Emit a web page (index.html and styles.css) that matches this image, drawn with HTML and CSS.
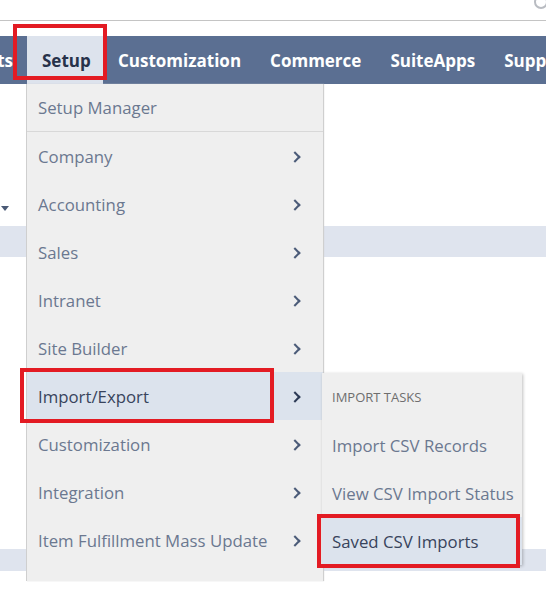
FILE: index.html
```html
<!DOCTYPE html>
<html>
<head>
<meta charset="utf-8">
<link rel="stylesheet" href="styles.css">
</head>
<body>
<div class="page">
  <header class="topbar">
    <svg class="search" width="20" height="20" viewBox="0 0 20 20"><circle cx="9" cy="2" r="6" fill="none" stroke="#b9bcc2" stroke-width="2"/></svg>
  </header>
  <nav class="nav">
    <div class="tab tab-cut">Documents</div>
    <div class="tab active">Setup</div>
    <div class="tab">Customization</div>
    <div class="tab">Commerce</div>
    <div class="tab">SuiteApps</div>
    <div class="tab">Support</div>
  </nav>
  <main class="content">
    <div class="caret-row"><span class="caret"></span></div>
    <div class="band"></div>
    <div class="spacer"></div>
    <div class="band band2"></div>
  </main>

  <div class="menu">
    <div class="item first"><span>Setup Manager</span></div>
    <div class="item"><span>Company</span><i class="chev"></i></div>
    <div class="item"><span>Accounting</span><i class="chev"></i></div>
    <div class="item"><span>Sales</span><i class="chev"></i></div>
    <div class="item"><span>Intranet</span><i class="chev"></i></div>
    <div class="item"><span>Site Builder</span><i class="chev"></i></div>
    <div class="item hl"><span>Import/Export</span><i class="chev"></i></div>
    <div class="item"><span>Customization</span><i class="chev"></i></div>
    <div class="item"><span>Integration</span><i class="chev"></i></div>
    <div class="item"><span>Item Fulfillment Mass Update</span><i class="chev"></i></div>
    <div class="item"><span>Brand</span><i class="chev"></i></div>
  </div>

  <div class="submenu">
    <div class="sub-head">IMPORT TASKS</div>
    <div class="sub-item">Import CSV Records</div>
    <div class="sub-item">View CSV Import Status</div>
    <div class="sub-item hl">Saved CSV Imports</div>
  </div>

  <div class="mark mark-setup"></div>
  <div class="mark mark-import"></div>
  <div class="mark mark-saved"></div>
</div>
</body>
</html>
```

FILE: styles.css
```css
* { box-sizing: border-box; }
html, body { margin: 0; padding: 0; background: #fff; }
body { font-family: "Open Sans", "Noto Sans", sans-serif; }
.page { position: relative; width: 546px; height: 591px; overflow: hidden; }

.topbar { height: 21px; border-bottom: 1px solid #c4c4c4; margin-bottom: 15px; position: relative; }
.search { position: absolute; right: -6px; top: 0; }

.nav { display: flex; height: 48px; background: #5b6f92; align-items: stretch; }
.tab { display: flex; align-items: center; padding: 0 14px 0 15px; color: #fff; font-weight: 700; font-size: 17px; white-space: nowrap; }
.tab-cut { width: 27px; flex: none; justify-content: flex-end; overflow: hidden; padding: 0 14px 0 0; }
.tab.active { background: #dde3ed; color: #27324a; width: 76px; flex: none; }

.content { padding-top: 106px; }
.caret-row { height: 36px; display: flex; align-items: center; padding-left: 1px; }
.caret { width: 0; height: 0; border-left: 4px solid transparent; border-right: 4px solid transparent; border-top: 5px solid #4a5a76; }
.band { height: 31px; background: #dfe4ee; }
.band2 { height: 22px; }
.spacer { height: 292px; }

.menu { position: absolute; left: 26px; top: 84px; width: 297px; height: 497px; overflow: hidden; background: #efefef; border-left: 1px solid #cfcfcf; box-shadow: 1px 0 1px #cfcfcf; }
.item { height: 48px; display: flex; align-items: center; justify-content: space-between; padding: 0 21px 0 11px; color: #6b7890; font-size: 16.8px; flex: none; }
.item.first { border-bottom: 1px solid #d8d8d8; }
.item.hl { background: #dce3ed; color: #38445c; }
.chev { width: 8px; height: 8px; border-right: 2px solid #4b5b78; border-top: 2px solid #4b5b78; transform: rotate(45deg); margin: 2px 3px 0 0; flex: none; }
.item.hl .chev { border-color: #2c3a55; }

.submenu { position: absolute; left: 322px; top: 373px; width: 200px; background: #efefef; box-shadow: 1px 1px 3px rgba(0,0,0,0.25); }
.sub-head { height: 48px; display: flex; align-items: center; padding-left: 10px; font-size: 13px; color: #6e6e6e; }
.sub-item { height: 48px; display: flex; align-items: center; padding: 0 0 0 10px; font-size: 16.8px; color: #6b7890; white-space: nowrap; }
.sub-item.hl { background: #dce3ed; color: #38445c; }

.mark { position: absolute; border: 4px solid #e31b23; }
.mark-setup { left: 13px; top: 24px; width: 94px; height: 56px; }
.mark-import { left: 20px; top: 368px; width: 254px; height: 55px; }
.mark-saved { left: 317px; top: 514px; width: 203px; height: 54px; }
```
